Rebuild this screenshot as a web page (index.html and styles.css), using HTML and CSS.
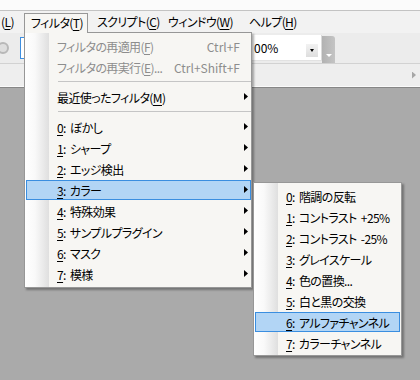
FILE: index.html
```html
<!DOCTYPE html>
<html lang="ja">
<head>
<meta charset="utf-8">
<title>フィルタ</title>
<link rel="stylesheet" href="styles.css">
</head>
<body>
<div class="app">
  <div class="titlestrip"></div>
  <div class="menubar">
    <span class="mb mb-l">(<u>L</u>)</span>
    <span class="mb mb-open">フィルタ(<u>T</u>)</span>
    <span class="mb mb-c">スクリプト(<u>C</u>)</span>
    <span class="mb mb-w">ウィンドウ(<u>W</u>)</span>
    <span class="mb mb-h">ヘルプ(<u>H</u>)</span>
  </div>
  <div class="toolbar">
    <span class="tb-circle"></span>
    <span class="tb-field"></span>
    <div class="combo"><span class="combo-text">00%</span><span class="combo-btn"></span></div>
    <span class="tb-drop"></span>
  </div>
  <div class="tabrow"><span class="tab-arrow"></span></div>
  <div class="canvas"></div>
</div>

<div class="menu main-menu">
  <div class="mi dis"><span class="lbl">フィルタの再適用(<u>F</u>)</span><span class="key">Ctrl+F</span></div>
  <div class="mi dis"><span class="lbl">フィルタの再実行(<u>E</u>)...</span><span class="key">Ctrl+Shift+F</span></div>
  <div class="sep"></div>
  <div class="mi sub"><span class="lbl">最近使ったフィルタ(<u>M</u>)</span></div>
  <div class="sep"></div>
  <div class="mi sub"><span class="lbl"><u>0</u>: ぼかし</span></div>
  <div class="mi sub"><span class="lbl"><u>1</u>: シャープ</span></div>
  <div class="mi sub"><span class="lbl"><u>2</u>: エッジ検出</span></div>
  <div class="mi sub sel"><span class="lbl"><u>3</u>: カラー</span></div>
  <div class="mi sub"><span class="lbl"><u>4</u>: 特殊効果</span></div>
  <div class="mi sub"><span class="lbl"><u>5</u>: サンプルプラグイン</span></div>
  <div class="mi sub"><span class="lbl"><u>6</u>: マスク</span></div>
  <div class="mi sub"><span class="lbl"><u>7</u>: 模様</span></div>
</div>

<div class="menu sub-menu">
  <div class="mi"><span class="lbl"><u>0</u>: 階調の反転</span></div>
  <div class="mi"><span class="lbl"><u>1</u>: コントラスト +25%</span></div>
  <div class="mi"><span class="lbl"><u>2</u>: コントラスト -25%</span></div>
  <div class="mi"><span class="lbl"><u>3</u>: グレイスケール</span></div>
  <div class="mi"><span class="lbl"><u>4</u>: 色の置換...</span></div>
  <div class="mi"><span class="lbl"><u>5</u>: 白と黒の交換</span></div>
  <div class="mi sel"><span class="lbl"><u>6</u>: アルファチャンネル</span></div>
  <div class="mi"><span class="lbl"><u>7</u>: カラーチャンネル</span></div>
</div>
</body>
</html>
```

FILE: styles.css
```css
* { box-sizing: border-box; }
html, body { margin: 0; padding: 0; }
body {
  width: 420px;
  height: 380px;
  overflow: hidden;
  position: relative;
  background: #aaaaaa;
  color: #000;
  font-family: "Noto Sans CJK JP", "Noto Sans", sans-serif;
  font-size: 12px;
  font-feature-settings: "palt";
}
u { text-underline-offset: 2px; }

.app { display: flex; flex-direction: column; height: 380px; }
.titlestrip { height: 11px; background: #fbfbfb; border-bottom: 1px solid #c3c3c3; }

.menubar { height: 22px; background: #f2f2f2; display: flex; align-items: flex-start; }
.mb { flex: none; height: 22px; line-height: 22px; white-space: nowrap; letter-spacing: -0.6px; }
.mb-l { width: 24px; padding-left: 1px; }
.mb-open {
  position: relative;
  z-index: 3;
  width: 64px;
  margin-top: 2px;
  height: 20px;
  line-height: 18px;
  padding-left: 6px;
  border: 1px solid #979797;
  border-bottom: 0;
  background: #f7f6f3;
}
.mb-c { width: 73px; padding-left: 9px; }
.mb-w { width: 81px; padding-left: 7px; }
.mb-h { padding-left: 7px; }

.toolbar {
  height: 31px;
  background: #ececec;
  border-bottom: 1px solid #d2d2d2;
  display: flex;
  align-items: center;
}
.tb-circle {
  flex: none;
  margin-left: -3px;
  width: 12px;
  height: 12px;
  border-radius: 50%;
  border: 2px solid #b8b8b8;
  background: #dedede;
}
.tb-field {
  flex: none;
  margin-left: 11px;
  width: 170px;
  height: 22px;
  background: #fff;
  border: 1px solid #3d8ee0;
}
.combo {
  flex: none;
  position: relative;
  margin-left: 60px;
  width: 72px;
  height: 26px;
  line-height: 26px;
  padding-left: 4px;
  background: #fff;
  border-right: 1px solid #dadada;
  border-bottom: 1px solid #e2e2e2;
}
.combo-btn {
  position: absolute;
  right: 3px;
  top: 9px;
  width: 12px;
  height: 13px;
  background: linear-gradient(#f2f2f2, #dedede);
}
.combo-btn::after {
  content: "";
  position: absolute;
  left: 4px;
  top: 5px;
  border-top: 3px solid #000;
  border-left: 2.5px solid transparent;
  border-right: 2.5px solid transparent;
}
.tb-drop {
  flex: none;
  align-self: flex-end;
  position: relative;
  width: 13px;
  height: 27px;
  background: linear-gradient(to right, #b2b2b2, #c4c4c4);
  border-radius: 0 3px 0 0;
}
.tb-drop::after {
  content: "";
  position: absolute;
  left: 4px;
  bottom: 6px;
  border-top: 3px solid #fff;
  border-left: 3px solid transparent;
  border-right: 3px solid transparent;
}

.tabrow {
  height: 23px;
  background: #eeeeee;
  border-bottom: 1px solid #fafafa;
  display: flex;
  justify-content: flex-end;
  align-items: center;
  padding-right: 4px;
}
.tab-arrow {
  width: 4px;
  height: 7px;
  background: #a6a6a6;
  clip-path: polygon(0 0, 100% 50%, 0 100%);
}
.canvas { flex: 1; background: #aaaaaa; border-top: 1px solid #868686; }

.menu {
  position: absolute;
  z-index: 2;
  border: 1px solid #979797;
  background-color: #f7f6f3;
  background-image: linear-gradient(to right, #ffffff 0, #f9f9f9 10px, #dfdfdf 24px, transparent 24px);
  box-shadow: 2px 2px 2px rgba(0, 0, 0, 0.32);
}
.main-menu { left: 24px; top: 32px; width: 228px; padding: 2px 0 2px; }
.sub-menu { left: 253px; top: 182px; width: 149px; padding: 2px 0 1px; }

.mi {
  position: relative;
  display: flex;
  align-items: center;
  height: 20px;
  margin: 1px 0 1px 1px;
  padding: 0 11px 0 31px;
  white-space: nowrap;
}
.sub-menu .mi { margin-right: 1px; }
.mi .lbl { flex: 1; letter-spacing: -0.6px; word-spacing: 2px; }
.mi.dis { color: #8d8d8d; }
.mi.sel {
  background: #b2d5f5;
  border: 1px solid #3a8ee0;
  padding-left: 30px;
}
.mi.sub::after {
  content: "";
  position: absolute;
  right: 3px;
  top: 6px;
  width: 4px;
  height: 7px;
  background: #000;
  clip-path: polygon(0 0, 100% 50%, 0 100%);
}
.mi.sub.sel::after { right: 2px; top: 5px; }

.sep { height: 8px; margin-left: 33px; position: relative; }
.sep::before {
  content: "";
  position: absolute;
  left: 0;
  right: 0;
  top: 3px;
  height: 1px;
  background: #c5c5c5;
}
```
